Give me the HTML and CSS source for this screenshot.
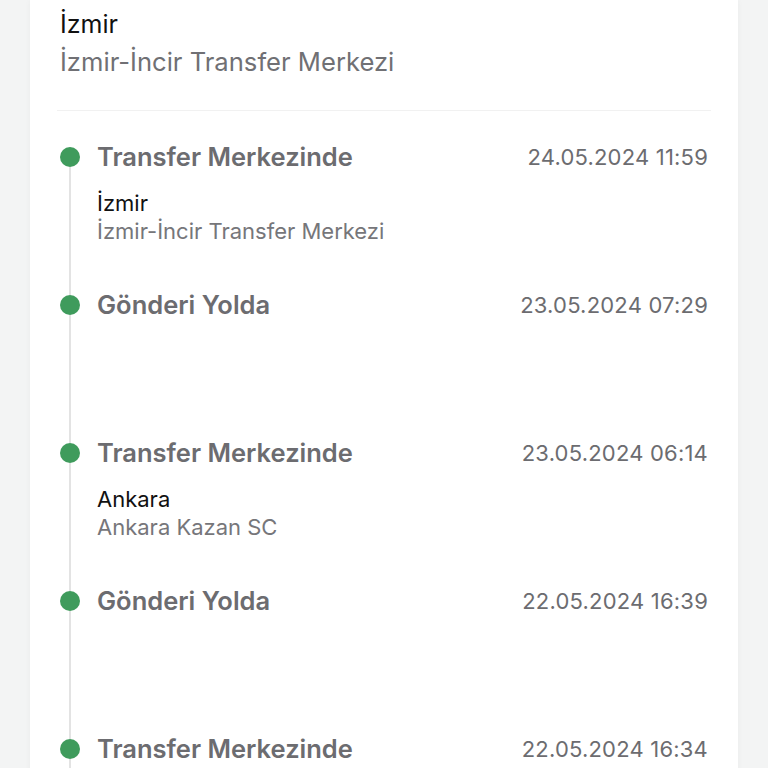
FILE: index.html
```html
<!DOCTYPE html>
<html lang="tr">

<head>
    <meta charset="utf-8">
    <meta name="viewport" content="width=device-width, initial-scale=1">
    <title>Gönderi Hareketleri</title>
    <link rel="stylesheet" href="styles.css">
</head>

<body>
    <main class="card">
        <header class="current">
            <div class="city">İzmir</div>
            <div class="branch">İzmir-İncir Transfer Merkezi</div>
        </header>

        <ol class="timeline">
            <li class="step">
                <div class="marker"><span class="dot"></span><span class="line"></span></div>
                <div class="info">
                    <div class="head">
                        <span class="status">Transfer Merkezinde</span>
                        <span class="date">24.05.2024 11:59</span>
                    </div>
                    <div class="place">
                        <div class="place-city">İzmir</div>
                        <div class="place-branch">İzmir-İncir Transfer Merkezi</div>
                    </div>
                </div>
            </li>
            <li class="step">
                <div class="marker"><span class="dot"></span><span class="line"></span></div>
                <div class="info">
                    <div class="head">
                        <span class="status">Gönderi Yolda</span>
                        <span class="date">23.05.2024 07:29</span>
                    </div>
                </div>
            </li>
            <li class="step">
                <div class="marker"><span class="dot"></span><span class="line"></span></div>
                <div class="info">
                    <div class="head">
                        <span class="status">Transfer Merkezinde</span>
                        <span class="date">23.05.2024 06:14</span>
                    </div>
                    <div class="place">
                        <div class="place-city">Ankara</div>
                        <div class="place-branch">Ankara Kazan SC</div>
                    </div>
                </div>
            </li>
            <li class="step">
                <div class="marker"><span class="dot"></span><span class="line"></span></div>
                <div class="info">
                    <div class="head">
                        <span class="status">Gönderi Yolda</span>
                        <span class="date">22.05.2024 16:39</span>
                    </div>
                </div>
            </li>
            <li class="step">
                <div class="marker"><span class="dot"></span><span class="line"></span></div>
                <div class="info">
                    <div class="head">
                        <span class="status">Transfer Merkezinde</span>
                        <span class="date">22.05.2024 16:34</span>
                    </div>
                </div>
            </li>
        </ol>
    </main>
</body>

</html>
```

FILE: styles.css
```css
html,
body {
    height: 100%;
    overflow: hidden;
}

body {
    margin: 0;
    font-family: Inter, "Noto Sans", sans-serif;
    background-color: #f3f4f4;
    color: #111;
}

.card {
    margin: 0 30px;
    padding: 5px 30px 0;
    min-height: 100%;
    background: #fff;
    box-shadow: 0 0 6px rgba(0, 0, 0, 0.04);
}

.current {
    padding-bottom: 29px;
    border-bottom: 1px solid #f1f1f1;
    margin: 0 -3px;
    padding-left: 3px;
}

.city {
    font-size: 25px;
    line-height: 38px;
    color: #111;
}

.branch {
    font-size: 25.6px;
    line-height: 38px;
    color: #707074;
}

.timeline {
    list-style: none;
    margin: 0;
    padding: 36px 0 0;
}

.step {
    display: flex;
    gap: 17px;
    height: 148px;
}

.marker {
    display: flex;
    flex-direction: column;
    align-items: center;
    width: 20px;
    flex: none;
}

.dot {
    width: 20px;
    height: 20px;
    border-radius: 50%;
    background: #3f9b5c;
    flex: none;
}

.line {
    flex: 1;
    width: 2px;
    background: #e3e3e3;
}

.info {
    flex: 1;
}

.head {
    display: flex;
    justify-content: space-between;
    align-items: center;
    height: 20px;
    line-height: 20px;
}

.status {
    font-size: 25.5px;
    font-weight: 600;
    color: #6c6c70;
}

.date {
    font-size: 22px;
    letter-spacing: 0.2px;
    color: #6c6c70;
}

.place {
    margin-top: 22px;
    font-size: 22px;
    line-height: 28px;
}

.place-city {
    color: #111;
}

.place-branch {
    color: #76767a;
}
```
